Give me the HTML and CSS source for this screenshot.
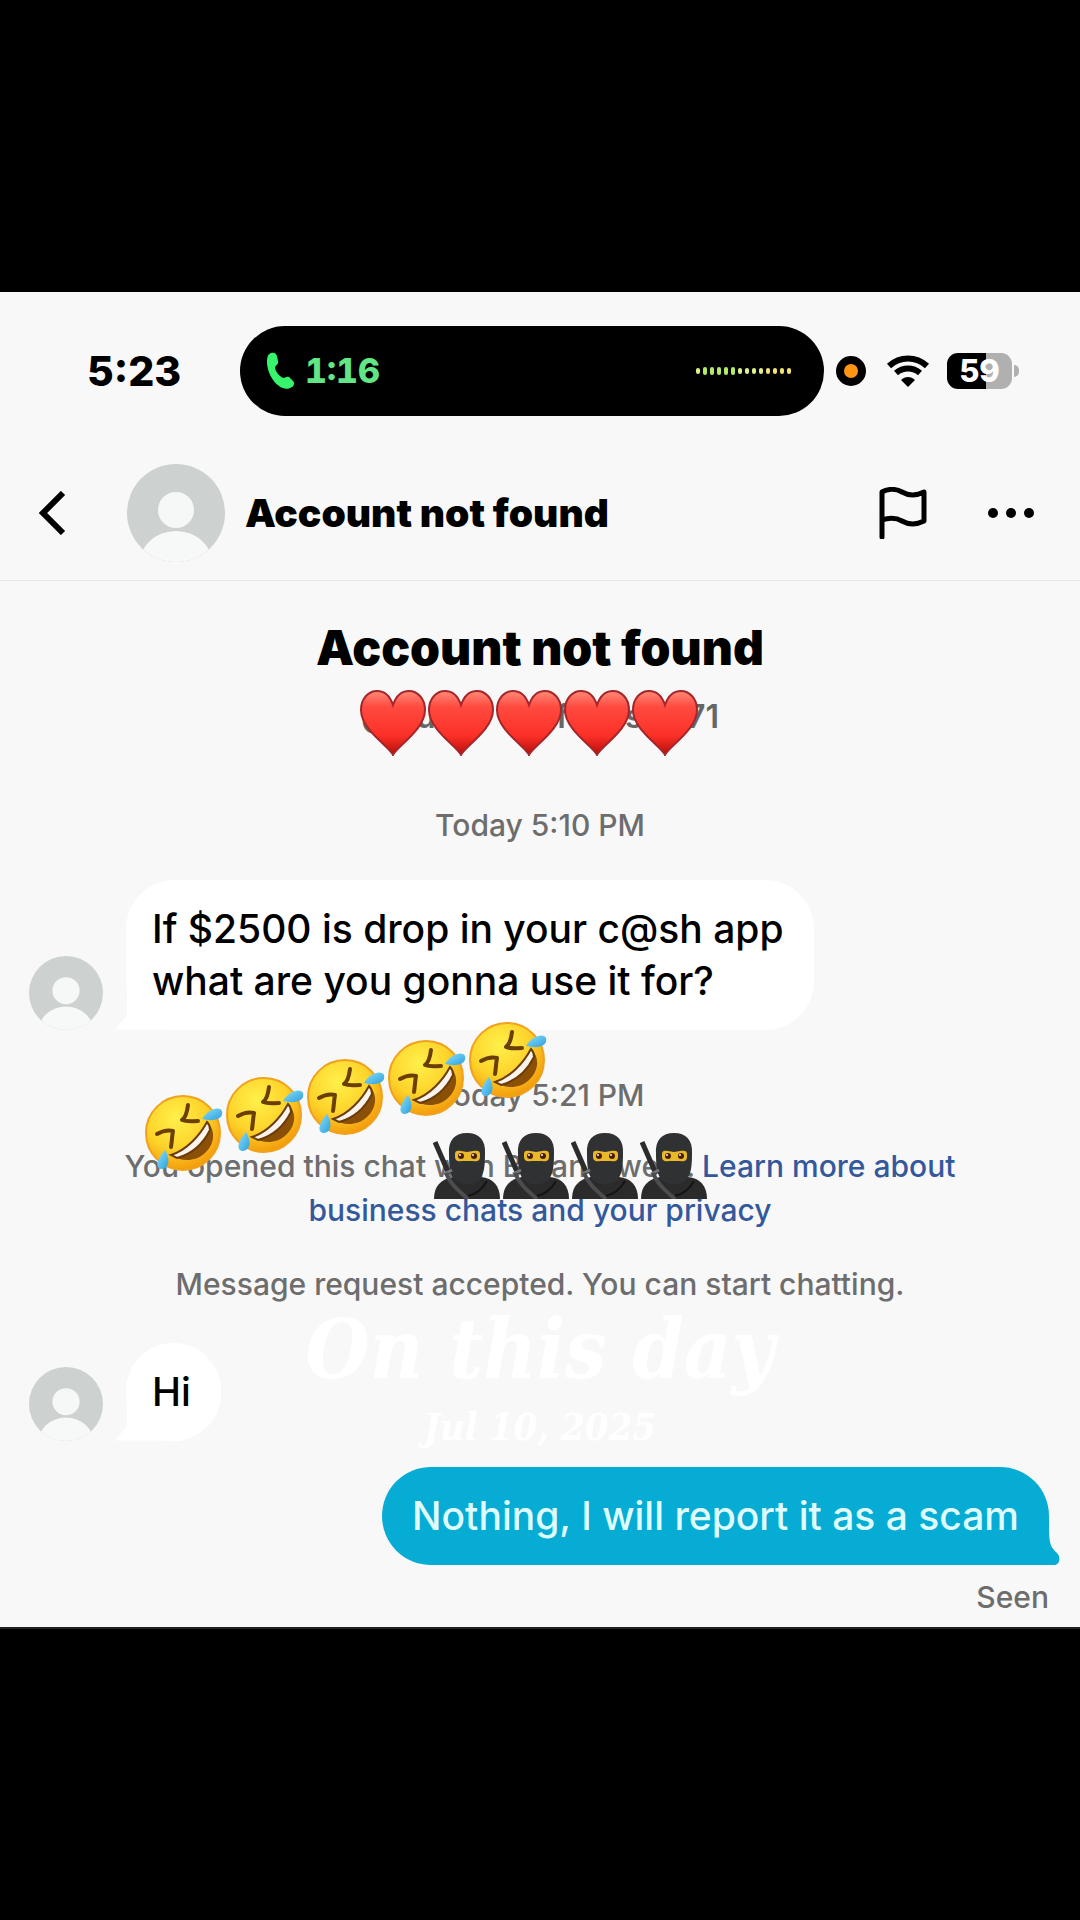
FILE: index.html
```html
<!DOCTYPE html>
<html lang="en">
<head>
  <meta charset="UTF-8">
  <meta name="viewport" content="width=device-width, initial-scale=1.0">
  <title>Account not found</title>
  <link rel="stylesheet" href="styles.css">
</head>
<body>
  <!-- Shared shapes -->
  <svg class="defs" width="0" height="0" aria-hidden="true">
    <defs>
      <linearGradient id="heartFill" x1="0" y1="0" x2="0" y2="1">
        <stop offset="0" stop-color="#ff8a78"/>
        <stop offset="0.25" stop-color="#ff4a40"/>
        <stop offset="0.7" stop-color="#fb3027"/>
        <stop offset="1" stop-color="#b80d0a"/>
      </linearGradient>
      <radialGradient id="faceFill" cx="0.4" cy="0.3" r="0.75">
        <stop offset="0" stop-color="#fff04a"/>
        <stop offset="0.55" stop-color="#fdd32a"/>
        <stop offset="1" stop-color="#f29408"/>
      </radialGradient>
      <linearGradient id="tearFill" x1="0" y1="0" x2="1" y2="1">
        <stop offset="0" stop-color="#8be0fa"/>
        <stop offset="1" stop-color="#2b9fdd"/>
      </linearGradient>
      <symbol id="avatar" viewBox="0 0 98 98">
        <clipPath id="avatarClip"><circle cx="49" cy="49" r="49"/></clipPath>
        <g clip-path="url(#avatarClip)">
          <rect width="98" height="98" fill="#cdd1d0"/>
          <circle cx="49" cy="46" r="18" fill="#f6f8f8"/>
          <ellipse cx="49" cy="101" rx="37" ry="34" fill="#f6f9f8"/>
        </g>
      </symbol>
      <symbol id="heart" viewBox="0 0 66 66">
        <path d="M33 65C30 57 1 40 1 20C1 8 9 1 17 1C25 1 30 6 33 15C36 6 41 1 49 1C57 1 65 8 65 20C65 40 36 57 33 65Z" fill="url(#heartFill)" stroke="#a5262a" stroke-width="2"/>
      </symbol>
      <symbol id="laugh" viewBox="0 0 80 80">
        <circle cx="38" cy="40" r="37" fill="url(#faceFill)" stroke="#f0a21c" stroke-width="2"/>
        <path d="M26 62C42 57 55 42 62 29C71 37 70 51 60 60C49 70 35 68 26 62Z" fill="#8a5008"/>
        <path d="M26 62C42 57 55 42 62 29C64 31 65 34 65 37C58 51 47 61 32 65Z" fill="#fbf4ee" stroke="#6b3c05" stroke-width="2"/>
        <path d="M43 12C42 20 40 25 37 27C42 29 47 28 53 28" fill="none" stroke="#6b3f04" stroke-width="4" stroke-linejoin="round" stroke-linecap="round"/>
        <path d="M12 41C19 37 24 37 28 38C27 43 27 48 26 54" fill="none" stroke="#6b3f04" stroke-width="4" stroke-linejoin="round" stroke-linecap="round"/>
        <path d="M57 26C63 16 74 13 77 18C79 26 69 29 57 26Z" fill="url(#tearFill)"/>
        <path d="M20 57C25 65 25 75 17 76C10 76 11 67 20 57Z" fill="url(#tearFill)"/>
      </symbol>
      <symbol id="ninja" viewBox="0 0 68 67">
        <path d="M1 67C1 54 8 47 20 45H48C60 46 67 54 67 67Z" fill="#2b2b2c"/>
        <path d="M16 22C15 8 22 1 34 1C46 1 53 8 52 22C52 34 51 42 47 47C42 54 26 54 21 47C17 42 16 34 16 22Z" fill="#303133"/>
        <path d="M22 22C22 19 24 18 28 19L34 20L40 19C45 18 47 19 47 22V25C47 29 44 30 40 29H29C24 30 22 28 22 25Z" fill="#e9b929"/>
        <circle cx="28" cy="24" r="3" fill="#4a1c0c"/>
        <circle cx="41" cy="24" r="3" fill="#4a1c0c"/>
        <circle cx="27" cy="23" r="1" fill="#fff3d0"/>
        <circle cx="40" cy="23" r="1" fill="#fff3d0"/>
        <path d="M2 10L16 42" stroke="#2c2c2e" stroke-width="5"/>
        <path d="M11 42L19 38" stroke="#77787a" stroke-width="3"/>
        <path d="M13 41C17 52 26 59 35 67" fill="none" stroke="#4c4d4f" stroke-width="4"/>
        <path d="M54 49C49 58 43 62 35 64" fill="none" stroke="#141415" stroke-width="2"/>
      </symbol>
    </defs>
  </svg>

  <main class="screen">
    <div class="status-bar">
      <span class="clock">5:23</span>
      <div class="island">
        <svg width="28" height="38" viewBox="0 0 28 38" aria-hidden="true">
          <path d="M5 1C8 0 10 1 11 4L12 9C13 12 10 13 9 15C9 19 13 24 17 26C19 26 20 24 23 25L27 29C29 31 28 34 26 35C22 38 17 37 13 34C6 29 1 19 1 10C1 5 2 2 5 1Z" fill="#36f56d"/>
        </svg>
        <span class="call-time">1:16</span>
        <span class="wave" aria-hidden="true">
          <i></i><i></i><i></i><i></i><i></i><i></i><i></i><i></i><i></i><i></i><i></i><i></i><i></i><i></i>
        </span>
      </div>
      <span class="mic"></span>
      <svg class="wifi" width="44" height="34" viewBox="0 0 44 34" aria-hidden="true">
        <path d="M3 12C14 2 30 2 41 12" fill="none" stroke="#000" stroke-width="6"/>
        <path d="M10 19C17 13 27 13 34 19" fill="none" stroke="#000" stroke-width="6"/>
        <path d="M15 26C19 22 25 22 29 26L22 33Z"/>
      </svg>
      <span class="battery">59</span>
    </div>

    <header class="header">
      <button class="icon-btn back" aria-label="Back">
        <svg width="28" height="44" viewBox="0 0 28 44"><path d="M24 2L4 22L24 42" fill="none" stroke="#000" stroke-width="6"/></svg>
      </button>
      <svg class="avatar-lg" role="img" aria-label="Avatar"><use href="#avatar"/></svg>
      <h1>Account not found</h1>
      <button class="icon-btn flag" aria-label="Report">
        <svg width="48" height="52" viewBox="0 0 48 52"><path d="M3 50V5C8 2 16 1 23 5C30 9 37 9 45 5V34C37 38 30 38 23 34C16 30 9 31 3 33" fill="none" stroke="#000" stroke-width="5" stroke-linejoin="round" stroke-linecap="round"/></svg>
      </button>
      <button class="icon-btn" aria-label="More">
        <svg width="48" height="12" viewBox="0 0 48 12"><circle cx="6" cy="6" r="5"/><circle cx="24" cy="6" r="5"/><circle cx="42" cy="6" r="5"/></svg>
      </button>
    </header>

    <section class="chat">
      <h2>Account not found</h2>
      <div class="handle">
        <span>@</span><span>u</span><span>f</span><span>es</span><span>71</span>
        <div class="hearts" aria-hidden="true">
          <svg><use href="#heart"/></svg>
          <svg><use href="#heart"/></svg>
          <svg><use href="#heart"/></svg>
          <svg><use href="#heart"/></svg>
          <svg><use href="#heart"/></svg>
        </div>
      </div>

      <p class="note first-time">Today 5:10 PM</p>

      <div class="row">
        <svg class="avatar-sm" role="img" aria-label="Avatar"><use href="#avatar"/></svg>
        <p class="bubble received">If $2500 is drop in your c@sh app<br>what are you gonna use it for?</p>
      </div>

      <div class="notices">
        <p class="note">Today 5:21 PM</p>
        <p class="note opened">You opened this chat <span class="covered"><span>with B</span><span>an</span><span>we</span><span>.</span></span> <a href="#">Learn more about<br>business chats and your privacy</a></p>
        <svg class="laughs" viewBox="0 0 404 154" aria-hidden="true">
          <use href="#laugh" x="0" y="73" width="80" height="80"/>
          <use href="#laugh" x="81" y="55" width="80" height="80"/>
          <use href="#laugh" x="162" y="37" width="80" height="80"/>
          <use href="#laugh" x="243" y="18" width="80" height="80"/>
          <use href="#laugh" x="324" y="0" width="80" height="80"/>
        </svg>
        <div class="ninjas" aria-hidden="true">
          <svg><use href="#ninja"/></svg>
          <svg><use href="#ninja"/></svg>
          <svg><use href="#ninja"/></svg>
          <svg><use href="#ninja"/></svg>
        </div>
      </div>

      <p class="note accepted">Message request accepted. You can start chatting.</p>

      <div class="row hi">
        <svg class="avatar-sm" role="img" aria-label="Avatar"><use href="#avatar"/></svg>
        <p class="bubble received">Hi</p>
        <div class="memory">
          <strong>On this day</strong>
          <span>Jul 10, 2025</span>
        </div>
      </div>

      <p class="bubble sent">Nothing, I will report it as a scam
        <svg class="tail" width="12" height="36" viewBox="0 0 12 36" aria-hidden="true"><path d="M0 0H1C1 14 3 19 9 24C13 28 12 36 6 36H0Z"/></svg>
      </p>
      <p class="note seen">Seen</p>
    </section>
  </main>
</body>
</html>
```
FILE: styles.css
```css
* { box-sizing: border-box; }
body { margin: 0; min-height: 100vh; display: flex; flex-direction: column; justify-content: center; background: #000; color: #000; font-family: Inter, "Liberation Sans", sans-serif; }
h1, h2, p { margin: 0; }
svg { display: block; flex: none; }
.defs { position: absolute; }
.screen { background: #f8f8f8; border-bottom: 2px solid #222; }

/* status bar */
.status-bar { display: flex; align-items: center; padding: 34px 68px 0 87px; }
.clock { flex: 1; font-size: 41px; font-weight: 800; }
.island { display: flex; align-items: center; width: 584px; height: 90px; padding: 0 33px 0 26px; background: #000; border-radius: 45px; }
.call-time { margin-left: 11px; font-size: 34px; font-weight: 800; font-variant-numeric: tabular-nums; color: #62e584; }
.wave { display: flex; align-items: center; gap: 3px; margin-left: auto; }
.wave i { width: 4px; height: 6px; border-radius: 2px; background: #dff08c; }
.wave i:nth-child(n+2):nth-child(-n+6) { height: 8px; background: #b5e968; }
.wave i:nth-child(n+11) { background: #f3e173; }
.mic { width: 30px; height: 30px; margin-left: 12px; border: 8px solid #000; border-radius: 50%; background: #ff9415; }
.wifi { margin-left: 20px; }
.battery { position: relative; width: 65px; height: 36px; margin-left: 17px; border-radius: 11px; background: linear-gradient(to right, #000 60%, #b0b0b0 60%); color: #fff; font-size: 31px; font-weight: 800; line-height: 36px; text-align: center; }
.battery::after { content: ""; position: absolute; left: 67px; top: 12px; width: 5px; height: 12px; border-radius: 0 6px 6px 0; background: #b0b0b0; }

/* header */
.header { display: flex; align-items: center; padding: 48px 45px 18px 39px; border-bottom: 1px solid #e6e6e6; }
.icon-btn { padding: 0; border: 0; background: none; }
.back { margin-right: 60px; }
.avatar-lg { width: 98px; height: 98px; margin-right: 20px; }
.header h1 { flex: 1; font-size: 39px; font-weight: 900; line-height: 52px; }
.flag { margin-right: 60px; }

/* conversation */
.chat { padding: 37px 29px 8px; }
.chat h2 { font-size: 48px; font-weight: 900; line-height: 60px; text-align: center; }
.handle { position: relative; display: grid; grid-template-columns: 55px 140px 50px 1fr auto; width: 358px; margin: 17px auto 0; font-size: 32px; font-weight: 600; line-height: 44px; color: #666; }
.hearts { position: absolute; left: -1px; top: -5px; display: flex; gap: 2px; }
.hearts svg { width: 66px; height: 66px; }
.note { font-size: 30px; font-weight: 500; line-height: 44px; text-align: center; color: #6d6d6d; }
.note a { color: #34589c; text-decoration: none; }
.first-time { margin-top: 64px; margin-bottom: 33px; }

.row { position: relative; display: flex; align-items: flex-end; gap: 23px; }
.avatar-sm { width: 74px; height: 74px; }
.bubble { position: relative; padding: 23px 30px; border-radius: 49px; font-size: 39px; font-weight: 500; line-height: 52px; }
.received { padding-left: 26px; background: #fff; }
.received::before { content: ""; position: absolute; left: -11px; bottom: 0; width: 60px; height: 36px; background: #fff; clip-path: polygon(0 100%, 12px 60%, 12px 0, 100% 100%); }

.notices { position: relative; margin-top: 43px; }
.opened { margin-top: 27px; }
.covered { display: inline-grid; grid-template-columns: 117px 66px 69px 8px; text-align: left; }
.laughs { position: absolute; left: calc(50% - 395px); top: -53px; width: 404px; height: 154px; }
.ninjas { position: absolute; left: calc(50% - 107px); top: 59px; display: flex; gap: 1px; }
.ninjas svg { width: 68px; height: 67px; }
.accepted { margin-top: 30px; }

.hi { margin-top: 37px; }
.memory { position: absolute; left: 0; right: 0; top: -52px; display: flex; flex-direction: column; font-family: "DejaVu Serif Condensed", "DejaVu Serif", serif; font-style: italic; font-weight: 700; color: #fff; text-align: center; }
.memory strong { font-size: 82px; line-height: 116px; }
.memory span { font-size: 38px; line-height: 40px; }

.sent { width: fit-content; margin: 26px 2px 0 auto; border-bottom-right-radius: 0; background: #06acd4; color: #dffcff; }
.tail { position: absolute; right: -11px; bottom: 0; fill: #06acd4; }
.seen { margin: 10px 2px 0; text-align: right; }
```
